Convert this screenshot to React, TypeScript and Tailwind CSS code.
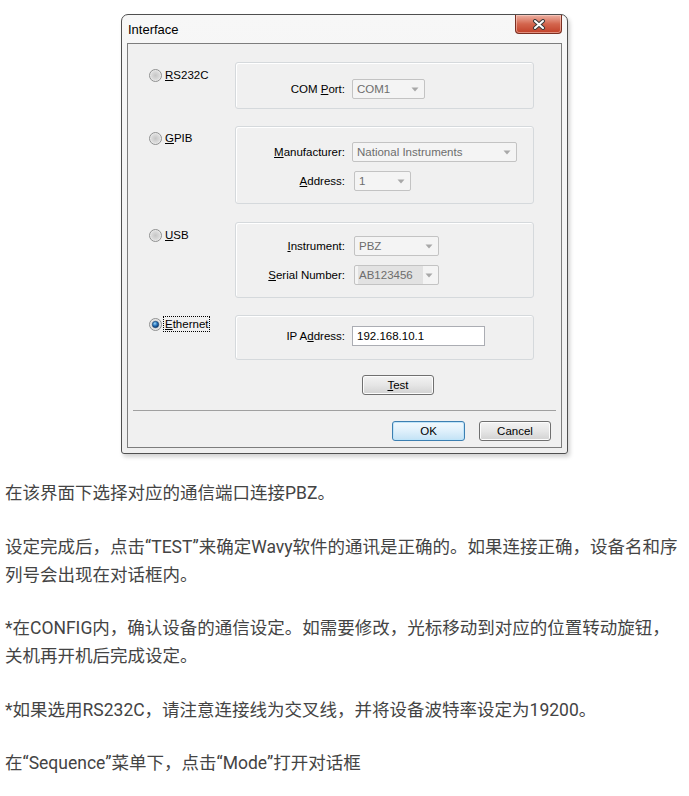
import type { ReactNode } from 'react'

const uiFont = { fontFamily: '"Liberation Sans", Arial, sans-serif' }

function Radio({ checked = false }: { checked?: boolean }) {
  return (
    <svg width="13" height="13" viewBox="0 0 13 13" className="shrink-0">
      <defs>
        <radialGradient id="rOff" cx="50%" cy="50%" r="50%">
          <stop offset="0%" stopColor="#c6c6c6" />
          <stop offset="70%" stopColor="#dcdcdc" />
          <stop offset="100%" stopColor="#f5f5f5" />
        </radialGradient>
        <radialGradient id="rOn" cx="40%" cy="35%" r="60%">
          <stop offset="0%" stopColor="#9fd7f5" />
          <stop offset="55%" stopColor="#2a78c0" />
          <stop offset="100%" stopColor="#0d3f78" />
        </radialGradient>
      </defs>
      <circle cx="6.5" cy="6.5" r="6" fill="url(#rOff)" stroke="#8e8f8f" />
      {checked && <circle cx="6.5" cy="6.5" r="3.2" fill="url(#rOn)" stroke="#173f6b" strokeWidth="0.6" />}
    </svg>
  )
}

function Key({ children }: { children: ReactNode }) {
  return <span className="underline underline-offset-[1px]">{children}</span>
}

function Combo({ text, width, shaded = false }: { text: string; width: string; shaded?: boolean }) {
  return (
    <div
      className={`${width} h-[20px] flex items-center justify-between rounded-[2px] border border-[#c3c3c3] bg-[#f4f4f4] pl-[3px] pr-[5px] text-[#6d6d6d]`}
    >
      <span className={`px-[1px] leading-[18px] ${shaded ? 'bg-[#e2e2e2] pr-[10px]' : ''}`}>{text}</span>
      <svg width="8" height="5" viewBox="0 0 8 5">
        <path d="M0.5 0.5 L7.5 0.5 L4 4.5 Z" fill="#a8a8a8" />
      </svg>
    </div>
  )
}

function Field({ label, children }: { label: ReactNode; children: ReactNode }) {
  return (
    <div className="flex items-center">
      <div className="w-[109px] text-right text-black">{label}</div>
      {children}
    </div>
  )
}

function Row({ radio, box, radioPad, space }: { radio: ReactNode; box: ReactNode; radioPad: string; space: string }) {
  return (
    <div className={`flex ${space}`}>
      <div className={`w-[107px] pl-[21px] ${radioPad}`}>{radio}</div>
      <div className="w-[299px] rounded-[3px] border border-[#d5d9dc] shadow-[inset_1px_1px_0_#fff]">{box}</div>
    </div>
  )
}

function WinButton({ children, primary = false, width }: { children: ReactNode; primary?: boolean; width: string }) {
  return (
    <div
      className={`${width} h-[20px] flex items-center justify-center rounded-[3px] border text-black ${
        primary
          ? 'border-[#3c7fb1] bg-gradient-to-b from-[#f2f9fd] via-[#dff0fb] to-[#c3e2f5] shadow-[inset_0_0_0_1px_#bfe4f9]'
          : 'border-[#707070] bg-gradient-to-b from-[#f3f3f3] via-[#e6e6e6] to-[#d2d2d2] shadow-[inset_0_0_0_1px_#fcfcfc]'
      }`}
    >
      {children}
    </div>
  )
}

function Dialog() {
  return (
    <div
      className="w-[447px] flex flex-col rounded-t-[7px] rounded-b-[3px] border border-[#4f4f4f] bg-gradient-to-b from-[#f7f7f7] to-[#efefef] px-[5px] pb-[5px] shadow-[2px_3px_4px_rgba(0,0,0,0.18)]"
      style={uiFont}
    >
      <div className="h-[28px] flex items-start justify-between">
        <span className="pl-[1px] pt-[5px] text-[13px] text-black">Interface</span>
        <div className="w-[47px] h-[19px] flex items-center justify-center rounded-b-[4px] border border-t-0 border-[#7a2f22] bg-gradient-to-b from-[#ecb0a3] via-[#d3654d] to-[#c13f27] shadow-[inset_0_0_0_1px_rgba(255,220,210,0.5)]">
          <svg width="14" height="11" viewBox="0 0 14 11">
            <path d="M3 2 L11 9 M11 2 L3 9" stroke="#3a3a3a" strokeWidth="4" strokeLinecap="round" />
            <path d="M3 2 L11 9 M11 2 L3 9" stroke="#ffffff" strokeWidth="2" strokeLinecap="round" />
          </svg>
        </div>
      </div>

      <div className="flex flex-col border border-[#7d7d7d] bg-[#f0f0f0] pt-[18px] pb-[6px] text-[11.5px] leading-[14px]">
        <Row
          space=""
          radioPad="pt-[6px]"
          radio={
            <div className="flex items-center gap-[3px]">
              <Radio />
              <span><Key>R</Key>S232C</span>
            </div>
          }
          box={
            <div className="pt-[16px] pb-[9px]">
              <Field label={<>COM <Key>P</Key>ort:</>}>
                <div className="ml-[7px]"><Combo text="COM1" width="w-[73px]" /></div>
              </Field>
            </div>
          }
        />
        <Row
          space="mt-[17px]"
          radioPad="pt-[5px]"
          radio={
            <div className="flex items-center gap-[3px]">
              <Radio />
              <span><Key>G</Key>PIB</span>
            </div>
          }
          box={
            <div className="flex flex-col gap-[9px] pt-[15px] pb-[12px]">
              <Field label={<><Key>M</Key>anufacturer:</>}>
                <div className="ml-[7px]"><Combo text="National Instruments" width="w-[165px]" /></div>
              </Field>
              <Field label={<><Key>A</Key>ddress:</>}>
                <div className="ml-[9px]"><Combo text="1" width="w-[57px]" /></div>
              </Field>
            </div>
          }
        />
        <Row
          space="mt-[18px]"
          radioPad="pt-[6px]"
          radio={
            <div className="flex items-center gap-[3px]">
              <Radio />
              <span><Key>U</Key>SB</span>
            </div>
          }
          box={
            <div className="flex flex-col gap-[9px] pt-[13px] pb-[12px]">
              <Field label={<><Key>I</Key>nstrument:</>}>
                <div className="ml-[9px]"><Combo text="PBZ" width="w-[85px]" /></div>
              </Field>
              <Field label={<><Key>S</Key>erial Number:</>}>
                <div className="ml-[9px]"><Combo text="AB123456" width="w-[85px]" shaded /></div>
              </Field>
            </div>
          }
        />
        <Row
          space="mt-[17px]"
          radioPad="pt-[1px]"
          radio={
            <div className="flex items-center gap-[1px]">
              <Radio checked />
              <span className="border border-dotted border-black px-[1px]"><Key>E</Key>thernet</span>
            </div>
          }
          box={
            <div className="pt-[10px] pb-[13px]">
              <Field label={<>IP A<Key>d</Key>dress:</>}>
                <div className="ml-[7px] w-[133px] h-[20px] flex items-center border border-[#abadb3] bg-white pl-[4px] text-black">
                  192.168.10.1
                </div>
              </Field>
            </div>
          }
        />

        <div className="mt-[15px] pl-[234px]">
          <WinButton width="w-[72px]"><span><Key>T</Key>est</span></WinButton>
        </div>

        <div className="mx-[5px] mt-[15px] h-px bg-[#a0a0a0]" />

        <div className="mt-[10px] flex justify-end gap-[14px] pr-[10px]">
          <WinButton width="w-[73px]" primary>OK</WinButton>
          <WinButton width="w-[72px]">Cancel</WinButton>
        </div>
      </div>
    </div>
  )
}

const paragraphs = [
  '在该界面下选择对应的通信端口连接PBZ。',
  '设定完成后，点击“TEST”来确定Wavy软件的通讯是正确的。如果连接正确，设备名和序列号会出现在对话框内。',
  '*在CONFIG内，确认设备的通信设定。如需要修改，光标移动到对应的位置转动旋钮，关机再开机后完成设定。',
  '*如果选用RS232C，请注意连接线为交叉线，并将设备波特率设定为19200。',
  '在“Sequence”菜单下，点击“Mode”打开对话框',
]

export default function App() {
  return (
    <div className="w-[689px] min-h-[796px] bg-white">
      <div className="flex justify-center pt-[14px]">
        <Dialog />
      </div>
      <div
        className="mt-[25px] px-[5px] text-[17.5px] leading-[28px] text-[#444]"
        style={{ fontFamily: 'Roboto, "Noto Sans CJK SC", sans-serif' }}
      >
        {paragraphs.map((p) => (
          <p key={p} className="mb-[25.5px]">
            {p}
          </p>
        ))}
      </div>
    </div>
  )
}
